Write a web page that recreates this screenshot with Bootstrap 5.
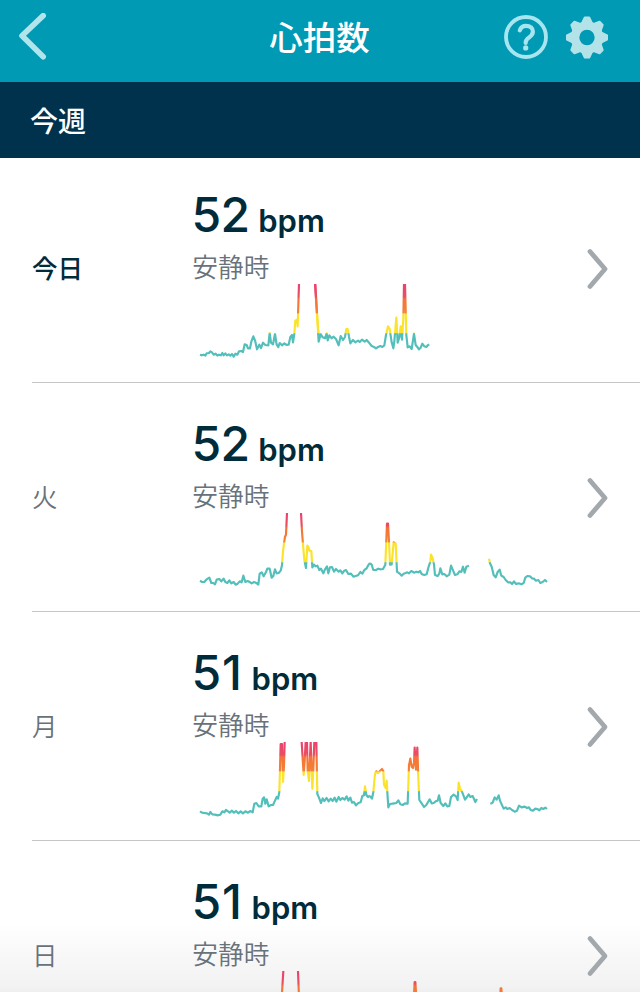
<!DOCTYPE html>
<html lang="ja">
<head>
<meta charset="utf-8">
<meta name="viewport" content="width=device-width, initial-scale=1">
<title>心拍数</title>
<link href="https://cdn.jsdelivr.net/npm/bootstrap@5.3.0/dist/css/bootstrap.min.css" rel="stylesheet">
<style>
  body { font-family: Inter, "Noto Sans CJK JP", sans-serif; color: #002b3b; background: #fff; }
  .screen { width: 640px; height: 992px; background: linear-gradient(#fff 925px, #f8f8f8 955px, #f2f2f2 988px, #eee 992px); }
  .topbar { height: 82px; background: #009ab4; padding: 0 32px 8px 18px; }
  .topbar h1 { font-size: 33.5px; font-weight: 500; color: #fff; line-height: 48px; padding: 1px 0 0 13px; }
  .side { width: 110px; }
  .week { height: 76px; background: #00324d; color: #fff; font-size: 28px; font-weight: 500; padding: 3px 0 0 30px; }
  .days { padding-left: 32px; margin-top: -4px; }
  .day { height: 229px; border-bottom: 1px solid #c3c5c6; }
  .day-name { width: 161px; font-size: 25.5px; font-weight: 350; color: #68727a; padding-top: 3px; }
  .day-name.today { font-weight: 500; color: #002b3b; }
  .reading { padding-top: 37px; }
  .bpm { line-height: 48px; height: 62px; }
  .num { font-size: 48px; font-weight: 500; margin-left: -1.5px; letter-spacing: -.75px; }
  .num.wide { letter-spacing: .75px; }
  .unit { font-size: 31px; font-weight: 600; margin-left: 9px; }
  .rest { font-size: 25.7px; font-weight: 350; color: #68727a; line-height: 30px; height: 31px; margin-left: -.7px; }
  .chart { margin-left: -3px; fill: none; stroke-width: 6.5; stroke-linejoin: round; }
  .next { margin: 2px 31px 0 0; }
</style>
</head>
<body>
<svg width="0" height="0" class="position-absolute" aria-hidden="true">
  <defs>
    <linearGradient id="zones" gradientUnits="userSpaceOnUse" x1="0" y1="0" x2="0" y2="200">
      <stop offset="0" stop-color="#ec4270"/><stop offset=".19" stop-color="#e94f60"/>
      <stop offset=".23" stop-color="#f47438"/><stop offset=".43" stop-color="#f58136"/>
      <stop offset=".45" stop-color="#fbe32b"/><stop offset=".735" stop-color="#fbe32b"/>
      <stop offset=".745" stop-color="#52bfba"/><stop offset="1" stop-color="#52bfba"/>
    </linearGradient>
    <linearGradient id="z1" href="#zones" gradientTransform="translate(0 27)"/>
    <linearGradient id="z2" href="#zones" gradientTransform="translate(0 24)"/>
    <linearGradient id="z3" href="#zones" gradientTransform="translate(0 21)"/>
  </defs>
</svg>
<div class="screen overflow-hidden">
  <header class="topbar d-flex align-items-center justify-content-between">
    <div class="side">
      <svg class="d-block" width="30" height="48" viewBox="0 0 30 48" fill="none" stroke="#b1e4eb" stroke-width="5.6" stroke-linecap="round" stroke-linejoin="round"><path d="M25.200 2.600 4 22.700l21.200 21"/></svg>
    </div>
    <h1 class="m-0">心拍数</h1>
    <div class="side d-flex justify-content-end align-items-center">
      <svg width="44" height="44" viewBox="0 0 44 44" fill="none" stroke="#a7e5ef" stroke-width="3.800" stroke-linecap="round"><circle cx="22" cy="22" r="20"/><path d="M15.800 15.300c1-3 3.300-4.500 6.300-4.500 4 0 6.800 2.400 6.800 5.800 0 2.800-1.500 4.200-3.700 5.800-2.200 1.600-3.500 2.600-3.500 4.800v.8" stroke-width="4.200"/><circle cx="21.700" cy="32.900" r="2.600" fill="#a7e5ef" stroke="none"/></svg>
      <svg width="44" height="44" viewBox="-22 -22.500 44 44" style="margin:0 -1px 0 17px">
        <circle r="12" fill="none" stroke="#b3e3e9" stroke-width="8.600"/>
        <g fill="#b3e3e9" stroke="#b3e3e9" stroke-width="2" stroke-linejoin="round">
          <path id="tooth" d="M-4.600-15-2.200-20H2.200L4.600-15Z"/>
          <use href="#tooth" transform="rotate(45)"/><use href="#tooth" transform="rotate(90)"/><use href="#tooth" transform="rotate(135)"/><use href="#tooth" transform="rotate(180)"/><use href="#tooth" transform="rotate(225)"/><use href="#tooth" transform="rotate(270)"/><use href="#tooth" transform="rotate(315)"/>
        </g>
      </svg>
    </div>
  </header>
  <div class="week d-flex align-items-center">今週</div>
  <main class="days">
    <section class="day d-flex">
      <div class="day-name today align-self-center flex-shrink-0">今日</div>
      <div class="reading flex-grow-1">
        <div class="bpm"><span class="num">52</span><span class="unit">bpm</span></div>
        <div class="rest">安静時</div>
        <svg class="chart d-block" width="360" height="80" viewBox="0 27 1080 240" stroke="url(#z1)">
          <path d="M30 239 35 241 41 239 46 242 50 235 57 234 61 229 66 232 71 239 77 236 82 242 87 239 93 241 97 234 101 241 106 235 111 241 116 238 121 242 126 237 131 245 136 236 142 239 147 229 154 228 159 231 164 208 170 210 174 220 180 220 184 200 190 184 195 196 201 223 208 209 213 219 219 203 226 210 235 211 239 174 243 203 249 208 255 177 260 209 265 216 269 204 276 211 283 205 290 210 296 209 301 186 306 180 309 202 313 176 316 137 321 134 323 154 327 27M376 27 381 115 386 179"/>
          <g transform="translate(360 0)"><path d="M15 27 21 118 26 200 32 177 38 187 45 190 50 175 53 196 58 181 65 190 70 185 78 192 86 211 92 183 99 195 105 186 109 162 113 162 117 185 121 205 129 195 136 202 144 197 149 201 156 194 164 200 170 195 177 203 185 213 192 216 198 220 204 216 211 213 217 216 223 211 228 180 234 154 239 162 245 202 250 220 253 199 259 128 263 203 268 187 272 154 276 194 280 130 282 27 285 27 289 180 293 217 299 214 305 222 312 176 317 210 322 216 327 223 332 218 337 206 343 214 349 216 354 210 358 209"/></g>
        </svg>
      </div>
      <svg class="next align-self-center flex-shrink-0" width="24" height="42" viewBox="0 0 24 42" fill="none" stroke="#a2a8ac" stroke-width="4.800" stroke-linecap="round" stroke-linejoin="round"><path d="M5 3.500 20 21 5 38.500"/></svg>
    </section>
    <section class="day d-flex">
      <div class="day-name align-self-center flex-shrink-0">火</div>
      <div class="reading flex-grow-1">
        <div class="bpm"><span class="num">52</span><span class="unit">bpm</span></div>
        <div class="rest">安静時</div>
        <svg class="chart d-block" width="360" height="80" viewBox="0 24 1080 240" stroke="url(#z2)">
          <path d="M30 227 36 231 43 231 50 223 58 218 64 234 70 234 75 238 80 224 88 222 94 229 101 221 106 231 112 234 118 226 124 235 131 231 137 239 143 236 149 229 155 232 160 212 166 231 173 228 179 231 185 235 192 231 199 234 205 239 209 206 215 202 221 214 228 201 232 191 239 191 245 218 250 213 255 193 260 205 266 204 272 197 276 181 279 139 282 115 285 95 288 89 291 24M333 24 336 79 339 119 343 165 348 189 352 122 356 128 358 137 364 138 367 187 372 179 377 184 382 182 388 195 393 191 400 205 405 193 411 184 415 205 420 187 426 186 432 200 438 192 446 200 451 196 457 205 462 198 468 195 475 207 483 206 490 215 497 213 504 211 511 201 517 206 523 195 530 190 534 182 540 174"/>
          <g transform="translate(540 0)"><path d="M0 174 5 179 10 195 18 195 25 191 31 193 39 192 46 179 51 56 54 56 57 110 60 179 65 178 71 112 77 116 81 200 88 205 95 212 101 206 107 204 112 202 117 205 124 198 132 203 139 200 145 202 150 198 156 208 163 210 170 208 175 188 181 170 183 149 187 157 192 178 195 210 203 213 208 206 211 190 217 208 223 207 230 214 238 209 243 182 249 196 255 210 262 208 268 199 274 201 279 185 284 203 289 185 297 182M357 161 360 175 365 185 371 210 377 217 383 201 389 194 394 212 401 216 407 225 414 232 421 232 426 237 432 229 438 237 446 235 454 238 461 234 466 218 472 213 480 214 486 220 492 221 498 227 505 225 511 234 518 231 525 225 531 231"/></g>
        </svg>
      </div>
      <svg class="next align-self-center flex-shrink-0" width="24" height="42" viewBox="0 0 24 42" fill="none" stroke="#a2a8ac" stroke-width="4.800" stroke-linecap="round" stroke-linejoin="round"><path d="M5 3.500 20 21 5 38.500"/></svg>
    </section>
    <section class="day d-flex">
      <div class="day-name align-self-center flex-shrink-0">月</div>
      <div class="reading flex-grow-1">
        <div class="bpm"><span class="num wide">51</span><span class="unit">bpm</span></div>
        <div class="rest">安静時</div>
        <svg class="chart d-block" width="360" height="80" viewBox="0 21 1080 240" stroke="url(#z3)">
          <path d="M30 229 36 233 43 234 51 235 57 239 61 231 67 238 75 239 84 241 91 239 97 229 103 232 108 225 114 229 119 233 125 227 132 233 138 228 145 235 152 229 159 235 166 229 174 233 181 228 188 232 193 206 199 204 206 214 214 214 218 191 222 187 226 206 230 193 236 214 243 210 249 210 255 197 260 186 264 191 268 171 270 101 272 27 276 27 279 141 282 91 284 21M335 21 341 120 344 77 347 21 351 21 353 107 357 138 359 87 362 21 367 161 370 101 373 21 379 21 382 177 387 188 393 204 398 190 403 198 410 189 416 199 422 191 428 198 434 188 439 200 446 186 451 195 457 189 464 194 470 184 475 197 481 188 486 203 492 201 498 211 505 204 512 202 517 183 522 181 525 154 529 180 534 186 540 182"/>
          <g transform="translate(540 0)"><path d="M0 183 6 191 10 171 15 117 19 109 24 114 30 108 36 102 40 108 42 149 47 159 50 137 52 172 55 217 60 207 67 206 73 205 79 204 85 196 91 208 98 210 105 205 113 206 117 91 121 71 125 95 129 99 132 83 134 38 138 104 142 38 145 130 148 195 155 205 162 216 169 210 174 201 179 193 185 205 191 204 197 199 203 197 207 181 212 204 220 213 226 205 232 214 238 213 243 186 251 179 258 184 263 195 266 143 270 161 276 170 285 194 291 186 296 178 301 186 308 183 316 201 321 192M361 206 368 203 374 187 380 194 386 181 390 197 395 208 401 221 407 217 412 222 419 219 426 225 434 230 441 227 447 212 455 217 464 215 471 219 477 217 482 225 489 227 496 221 502 222 508 226 514 219 520 222 526 218 531 222"/></g>
        </svg>
      </div>
      <svg class="next align-self-center flex-shrink-0" width="24" height="42" viewBox="0 0 24 42" fill="none" stroke="#a2a8ac" stroke-width="4.800" stroke-linecap="round" stroke-linejoin="round"><path d="M5 3.500 20 21 5 38.500"/></svg>
    </section>
    <section class="day d-flex">
      <div class="day-name align-self-center flex-shrink-0">日</div>
      <div class="reading flex-grow-1">
        <div class="bpm"><span class="num wide">51</span><span class="unit">bpm</span></div>
        <div class="rest">安静時</div>
        <svg class="chart d-block" width="360" height="80" viewBox="0 0 1080 240" stroke="url(#zones)">
          <path d="M272 130 280 0M324 0 329 130M670 110 674 33 676 33 681 110M929 115 932 52 934 52 938 115"/>
        </svg>
      </div>
      <svg class="next align-self-center flex-shrink-0" width="24" height="42" viewBox="0 0 24 42" fill="none" stroke="#a2a8ac" stroke-width="4.800" stroke-linecap="round" stroke-linejoin="round"><path d="M5 3.500 20 21 5 38.500"/></svg>
    </section>
  </main>
</div>
<script src="https://cdn.jsdelivr.net/npm/bootstrap@5.3.0/dist/js/bootstrap.bundle.min.js"></script>
</body>
</html>
